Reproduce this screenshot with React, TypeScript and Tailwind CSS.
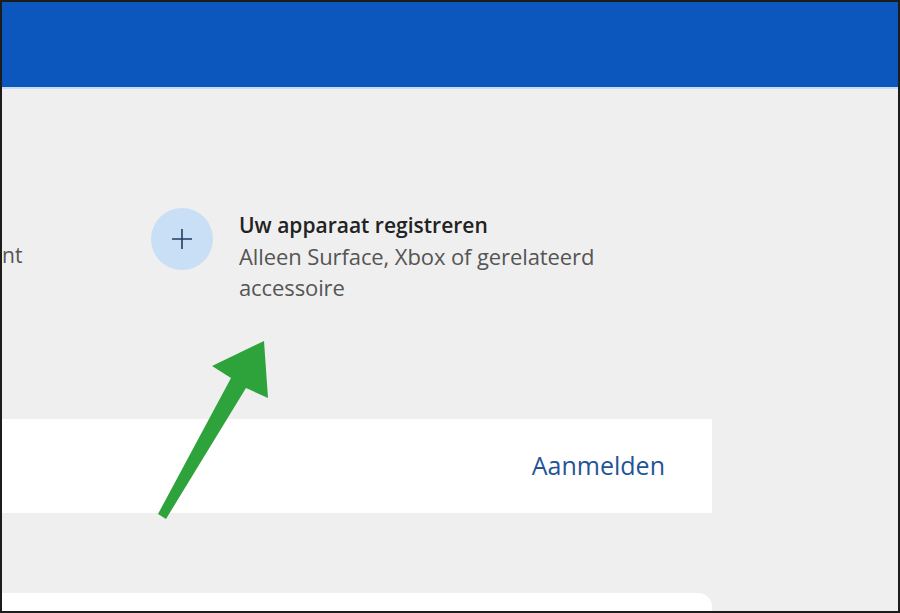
export default function App() {
  return (
    <div
      className="relative w-[900px] h-[613px] overflow-hidden border-2 border-[#1c1c1c] bg-[#efefef]"
      style={{ fontFamily: '"Open Sans", "Noto Sans", sans-serif' }}
    >
      <header className="h-[87px] bg-[#0b57bd] border-b-2 border-[#c9dcf3]" />

      <div className="flex items-start mt-[119px]">
        <div className="w-[22px] shrink-0 pt-[32px]">
          <span className="whitespace-nowrap text-[21px] leading-[31px] text-[#555]">nt</span>
        </div>
        <div className="ml-[127px] flex items-start">
          <div className="w-[62px] h-[62px] rounded-full bg-[#c9dff5] flex items-center justify-center shrink-0">
            <svg width="22" height="22" viewBox="0 0 22 22" fill="none">
              <path d="M11 1v20M1 11h20" stroke="#1f3f66" strokeWidth="1.6" />
            </svg>
          </div>
          <div className="ml-[26px] mt-[1px]">
            <div className="text-[21px] leading-[32px] font-semibold text-[#222]">
              Uw apparaat registreren
            </div>
            <div className="w-[380px] text-[22px] leading-[31px] text-[#555] tracking-[-0.1px]">
              Alleen Surface, Xbox of gerelateerd accessoire
            </div>
          </div>
        </div>
      </div>

      <div className="mt-[116px] w-[710px] h-[94px] bg-white flex items-center justify-end pr-[47px]">
        <span className="text-[25px] text-[#1f5596]">Aanmelden</span>
      </div>

      <div className="mt-[80px] w-[710px] h-[40px] bg-white rounded-tr-[14px]" />

      <svg className="absolute left-0 top-0 pointer-events-none" width="900" height="613">
        <polygon
          points="262,339 266,396 244,386 164,517 156,512 229,376 210,364"
          fill="#2ea33b"
        />
      </svg>
    </div>
  )
}
